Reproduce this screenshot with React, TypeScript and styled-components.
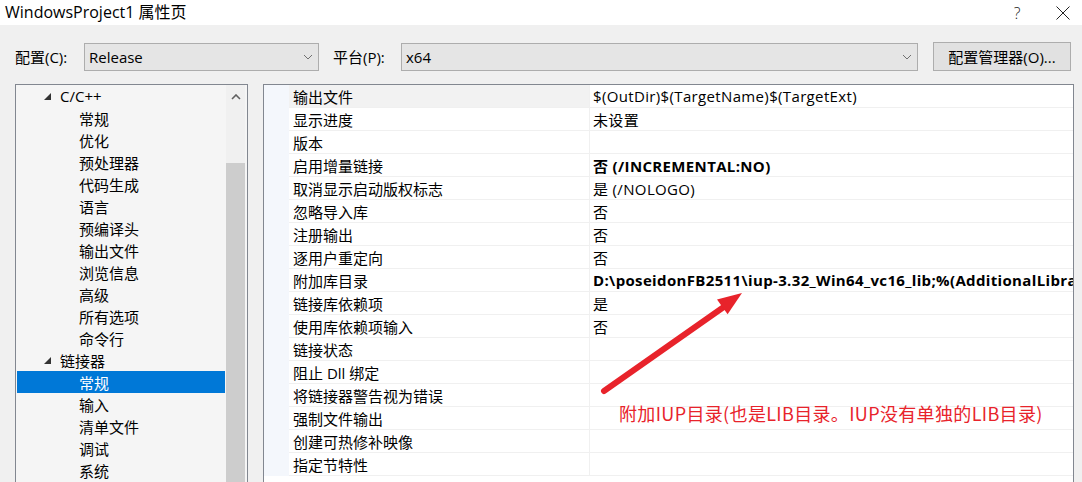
import React from "react";
import styled, { createGlobalStyle } from "styled-components";

const Global = createGlobalStyle`
  html, body { margin: 0; padding: 0; }
  body {
    background: #f0f0f0;
    font-family: "Segoe UI", "Open Sans", "Noto Sans CJK SC", sans-serif;
    font-size: 15px;
    color: #000;
    overflow: hidden;
  }
`;

const Window = styled.div`
  position: relative;
  width: 1082px;
  height: 482px;
  overflow: hidden;
  display: flex;
  flex-direction: column;
  background: #f0f0f0;
`;

const TitleBar = styled.div`
  height: 25px;
  flex-shrink: 0;
  background: #fff;
  display: flex;
  align-items: center;
  padding-left: 5px;
`;

const Title = styled.div`
  flex: 1;
  font-size: 16px;
  line-height: 25px;
  white-space: nowrap;
`;

const TitleButton = styled.div<{ $w: number }>`
  width: ${(p) => p.$w}px;
  height: 25px;
  display: flex;
  align-items: center;
  justify-content: center;
  font-size: 16px;
  font-weight: 300;
  color: #222;
`;

const ToolRow = styled.div`
  display: flex;
  align-items: center;
  padding: 17px 0 0 15px;
  height: 29px;
  flex-shrink: 0;
`;

const Label = styled.div<{ $w: number }>`
  width: ${(p) => p.$w}px;
  white-space: nowrap;
`;

const Combo = styled.div<{ $w: number }>`
  box-sizing: border-box;
  width: ${(p) => p.$w}px;
  height: 28px;
  border: 1px solid #adadad;
  background: #e5e5e5;
  display: flex;
  align-items: center;
  padding: 0 5px 0 4px;
`;

const ComboText = styled.div`
  flex: 1;
`;

const Button = styled.div`
  box-sizing: border-box;
  margin-left: 15px;
  width: 138px;
  height: 29px;
  border: 1px solid #adadad;
  background: #e1e1e1;
  display: flex;
  align-items: center;
  justify-content: center;
  white-space: nowrap;
`;

const Body = styled.div`
  flex: 1;
  display: flex;
  gap: 15px;
  padding: 13px 0 0 15px;
  min-height: 0;
`;

const TreePanel = styled.div`
  box-sizing: border-box;
  width: 233px;
  border: 1px solid #828790;
  border-bottom: none;
  background: #f5f5f5;
  display: flex;
  overflow: hidden;
`;

const TreeList = styled.div`
  width: 210px;
  box-sizing: border-box;
  padding: 0 1px;
`;

const TreeRow = styled.div<{ $indent: number; $selected?: boolean }>`
  height: 22px;
  display: flex;
  align-items: center;
  padding-left: ${(p) => p.$indent}px;
  background: ${(p) => (p.$selected ? "#0078d7" : "transparent")};
  color: ${(p) => (p.$selected ? "#fff" : "#000")};
  white-space: nowrap;
`;

const Expander = styled.span`
  width: 16px;
  display: inline-flex;
  align-items: center;
`;

const ScrollBar = styled.div`
  width: 19px;
  margin-right: 2px;
  background: #f0f0f0;
  display: flex;
  flex-direction: column;
`;

const ScrollArrow = styled.div`
  height: 24px;
  display: flex;
  align-items: center;
  justify-content: center;
`;

const ScrollThumb = styled.div`
  margin-top: 54px;
  flex: 1;
  background: #cdcdcd;
`;

const GridPanel = styled.div`
  box-sizing: border-box;
  width: 811px;
  border: 1px solid #828790;
  border-bottom: none;
  background: #fff;
  overflow: hidden;
`;

const GridRow = styled.div`
  height: 23px;
  display: flex;
`;

const Gutter = styled.div`
  width: 25px;
  flex-shrink: 0;
  background: #f4f7fc;
`;

const NameCell = styled.div<{ $active?: boolean }>`
  box-sizing: border-box;
  width: 301px;
  flex-shrink: 0;
  padding-left: 4px;
  border-right: 1px solid #f0f0f0;
  border-bottom: 1px solid #f0f0f0;
  background: ${(p) => (p.$active ? "#f2f2f2" : "#fff")};
  display: flex;
  align-items: center;
  white-space: nowrap;
`;

const ValueCell = styled.div<{ $bold?: boolean }>`
  box-sizing: border-box;
  flex: 1;
  min-width: 0;
  padding-left: 3px;
  border-bottom: 1px solid #f0f0f0;
  display: flex;
  align-items: center;
  white-space: nowrap;
  overflow: hidden;
  letter-spacing: 0.35px;
  font-weight: ${(p) => (p.$bold ? 700 : 400)};
`;

const Overlay = styled.svg`
  position: absolute;
  left: 0;
  top: 0;
  pointer-events: none;
`;

const Note = styled.div`
  position: absolute;
  left: 619px;
  top: 400px;
  font-family: "Noto Sans CJK SC", "Open Sans", sans-serif;
  font-size: 18px;
  line-height: 26px;
  letter-spacing: 0.35px;
  color: #e8232b;
  white-space: nowrap;
`;

const Chevron = ({ up }: { up?: boolean }) => (
  <svg width="10" height="6" viewBox="0 0 10 6">
    <polyline
      points={up ? "1,5 5,1 9,5" : "1,1 5,5 9,1"}
      fill="none"
      stroke={up ? "#606060" : "#707070"}
      strokeWidth={up ? 1.6 : 1}
    />
  </svg>
);

const tree: { text: string; level: number; selected?: boolean }[] = [
  { text: "C/C++", level: 0 },
  { text: "常规", level: 1 },
  { text: "优化", level: 1 },
  { text: "预处理器", level: 1 },
  { text: "代码生成", level: 1 },
  { text: "语言", level: 1 },
  { text: "预编译头", level: 1 },
  { text: "输出文件", level: 1 },
  { text: "浏览信息", level: 1 },
  { text: "高级", level: 1 },
  { text: "所有选项", level: 1 },
  { text: "命令行", level: 1 },
  { text: "链接器", level: 0 },
  { text: "常规", level: 1, selected: true },
  { text: "输入", level: 1 },
  { text: "清单文件", level: 1 },
  { text: "调试", level: 1 },
  { text: "系统", level: 1 },
];

const props: { name: string; value: string; bold?: boolean }[] = [
  { name: "输出文件", value: "$(OutDir)$(TargetName)$(TargetExt)" },
  { name: "显示进度", value: "未设置" },
  { name: "版本", value: "" },
  { name: "启用增量链接", value: "否 (/INCREMENTAL:NO)", bold: true },
  { name: "取消显示启动版权标志", value: "是 (/NOLOGO)" },
  { name: "忽略导入库", value: "否" },
  { name: "注册输出", value: "否" },
  { name: "逐用户重定向", value: "否" },
  {
    name: "附加库目录",
    value: "D:\\poseidonFB2511\\iup-3.32_Win64_vc16_lib;%(AdditionalLibraryDirectories)",
    bold: true,
  },
  { name: "链接库依赖项", value: "是" },
  { name: "使用库依赖项输入", value: "否" },
  { name: "链接状态", value: "" },
  { name: "阻止 Dll 绑定", value: "" },
  { name: "将链接器警告视为错误", value: "" },
  { name: "强制文件输出", value: "" },
  { name: "创建可热修补映像", value: "" },
  { name: "指定节特性", value: "" },
];

export default function App() {
  return (
    <>
      <Global />
      <Window>
        <TitleBar>
          <Title>WindowsProject1 属性页</Title>
          <TitleButton $w={46}>?</TitleButton>
          <TitleButton $w={4} />
          <TitleButton $w={38}>
            <svg width="14" height="14" viewBox="0 0 14 14">
              <path d="M0.5 0.5 L13.5 13.5 M13.5 0.5 L0.5 13.5" stroke="#222" strokeWidth="1" />
            </svg>
          </TitleButton>
        </TitleBar>
        <ToolRow>
          <Label $w={69}>配置(C):</Label>
          <Combo $w={235}>
            <ComboText>Release</ComboText>
            <Chevron />
          </Combo>
          <Label $w={14} />
          <Label $w={68}>平台(P):</Label>
          <Combo $w={517}>
            <ComboText>x64</ComboText>
            <Chevron />
          </Combo>
          <Button>配置管理器(O)...</Button>
        </ToolRow>
        <Body>
          <TreePanel>
            <TreeList>
              {tree.map((t, i) => (
                <TreeRow key={i} $indent={t.level === 0 ? 27 : 62} $selected={t.selected}>
                  {t.level === 0 && (
                    <Expander>
                      <svg width="7" height="7" viewBox="0 0 7 7">
                        <polygon points="7,0 7,7 0,7" fill="#333" />
                      </svg>
                    </Expander>
                  )}
                  {t.text}
                </TreeRow>
              ))}
            </TreeList>
            <ScrollBar>
              <ScrollArrow>
                <Chevron up />
              </ScrollArrow>
              <ScrollThumb />
            </ScrollBar>
          </TreePanel>
          <GridPanel>
            {props.map((p, i) => (
              <GridRow key={i}>
                <Gutter />
                <NameCell $active={i === 0}>{p.name}</NameCell>
                <ValueCell $bold={p.bold}>{p.value}</ValueCell>
              </GridRow>
            ))}
          </GridPanel>
        </Body>
        <Overlay width="1082" height="482" viewBox="0 0 1082 482">
          <line x1="604" y1="391" x2="728" y2="304" stroke="#e8232b" strokeWidth="6" strokeLinecap="round" />
          <polygon points="742,293 717,299.6 727.6,314.2" fill="#e8232b" />
        </Overlay>
        <Note>附加IUP目录(也是LIB目录。IUP没有单独的LIB目录)</Note>
      </Window>
    </>
  );
}
